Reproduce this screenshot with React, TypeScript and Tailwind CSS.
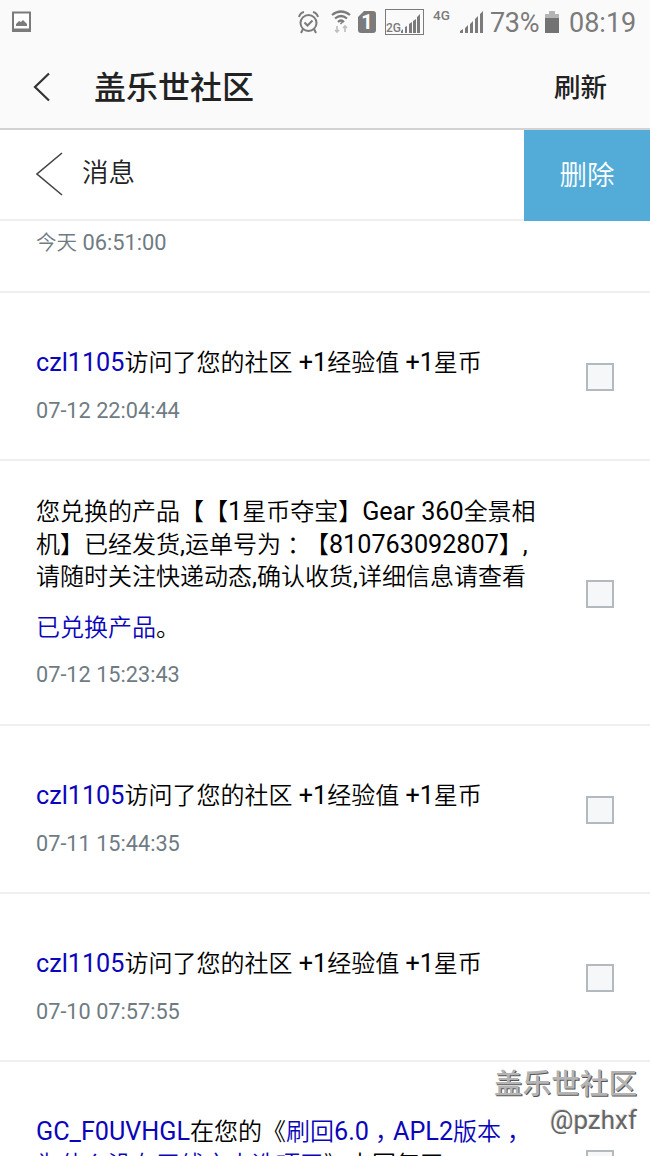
import type { ReactNode } from 'react';

const cjk = "font-['Noto_Sans_CJK_SC',sans-serif]";
const latin = "font-['Roboto','Noto_Sans_CJK_SC',sans-serif]";

function Text({ children }: { children: string }) {
  const parts = children.split(/([\x20-\x7e]+|[，：])/).filter(Boolean);
  return (
    <>
      {parts.map((part, i) => {
        if (/^[，：]$/.test(part)) {
          return (
            <span key={i} className="ml-[6px] -mr-[6px]">
              {part}
            </span>
          );
        }
        return /^[\x20-\x7e]/.test(part) ? (
          <span key={i} className={`${latin} text-[25.2px] font-normal`}>
            {part}
          </span>
        ) : (
          <span key={i}>{part}</span>
        );
      })}
    </>
  );
}

function Line({ children }: { children: ReactNode }) {
  return <div className="h-[32.5px]">{children}</div>;
}

function Link({ children }: { children: string }) {
  return (
    <a className="text-[#0b05bb]">
      <Text>{children}</Text>
    </a>
  );
}

function Time({ children }: { children: ReactNode }) {
  return (
    <div className={`${latin} mt-[21px] h-6 text-[21.7px] font-normal leading-6 text-[#6f7b83]`}>{children}</div>
  );
}

function Row({ className, children }: { className: string; children: ReactNode }) {
  return (
    <li className={`flex shrink-0 items-center border-b-2 border-[#efefef] pl-9 pr-9 ${className}`}>
      <div className="h-full flex-1 whitespace-nowrap text-2xl font-[350] leading-[32.5px] text-black">
        {children}
      </div>
      <span className="relative top-px size-7 shrink-0 border-2 border-[#b3babf] bg-[#f6f7f8]" />
    </li>
  );
}

function Visit({ time }: { time: string }) {
  return (
    <Row className="h-[168px]">
      <div className="pt-[52px]">
        <Line>
          <Link>czl1105</Link>
          <Text>访问了您的社区 +1经验值 +1星币</Text>
        </Line>
      </div>
      <Time>{time}</Time>
    </Row>
  );
}

function Signal() {
  return (
    <svg width="24" height="23" viewBox="0 0 24 23" fill="#7b7b7b">
      <path d="M0 22v-2l3-2v4zM5 22v-5l3-3v8zM10 22v-9l3-3v12zM15 22V8l3-3v17zM20 22V3l3-3v22z" />
    </svg>
  );
}

function StatusBar() {
  return (
    <div className="flex h-11 items-center pl-[11px] pr-[13px] text-[#7b7b7b]">
      <svg width="21" height="22" viewBox="0 0 21 22" className="mr-[266px]">
        <path d="M2 1.5h17v17H2z" fill="#fff" stroke="#7b7b7b" strokeWidth="2" />
        <path d="M1 18h19v3H1zM5 15v-2l3-3 2 1 2-2 4 4v2z" fill="#7b7b7b" />
      </svg>
      <svg width="21" height="23" viewBox="0 0 21 23" fill="none" stroke="#7b7b7b" strokeWidth="2">
        <circle cx="10.5" cy="12" r="8" />
        <path d="M6.5 11.5l3 3 5-5M1 6q1-4 5-5M20 6q-1-4-5-5M5 18l-2 4M16 18l2 4" />
      </svg>
      <svg width="20" height="24" viewBox="0 0 20 24" className="ml-[12px]" fill="none" stroke="#7b7b7b" strokeWidth="2.2">
        <path d="M1 5q9-7 18 0M4 8.5q6-5 12 0M7 12q3-3 6 0" />
        <path d="M10 12.5l1 1" strokeWidth="3" />
        <path d="M6 16v6m-2-2l2 2 2-2M14 22v-6m-2 2l2-2 2 2" stroke="#c0c0c0" strokeWidth="1.7" />
      </svg>
      <span className="ml-[7px] grid h-[22px] w-[18px] place-items-center">
        <svg width="18" height="22" viewBox="0 0 18 22" className="col-start-1 row-start-1" fill="#7b7b7b">
          <path d="M6 0h9q3 0 3 3v16q0 3-3 3H3q-3 0-3-3V6z" />
        </svg>
        <span className={`${latin} col-start-1 row-start-1 text-[20px] font-bold leading-none text-white`}>1</span>
      </span>
      <span className="ml-[9px] flex h-[26px] w-[39px] items-end border-[1.5px] border-[#7b7b7b]">
        <span className={`${latin} text-[12px] font-medium leading-[11px]`}>2G</span>
        <svg width="20" height="21" viewBox="0 0 20 21" fill="#7b7b7b">
          <path d="M0 20v-2l2-2v4zM4 20v-6l2-1v7zM8 20v-9l3-2v11zM12 20V8l3-2v14zM16 20V4l3-3v19z" />
        </svg>
      </span>
      <span className={`${latin} mb-[12px] ml-[9px] w-[18px] text-[13.5px] font-medium leading-none`}>4G</span>
      <span className="ml-[9px]">
        <Signal />
      </span>
      <span className={`${latin} ml-[6px] w-[51px] whitespace-nowrap pt-[2px] text-[27px] leading-none tracking-[-0.3px]`}>
        73%
      </span>
      <svg width="16" height="23" viewBox="0 0 16 23" className="ml-[3px]">
        <path d="M1 3h4V0h6v3h4v5H1z" fill="#b5b5b5" />
        <path d="M1 7h14v15H1z" fill="#737373" />
      </svg>
      <span className={`${latin} ml-[9px] whitespace-nowrap pt-[2px] text-[27px] leading-none`}>08:19</span>
    </div>
  );
}

export default function App() {
  return (
    <main
      className={`${cjk} relative flex h-[1156px] w-[650px] flex-col overflow-hidden bg-white [text-spacing-trim:space-all]`}
    >
      <header className="h-[130px] shrink-0 border-b-2 border-[#d2d2d2] bg-[#fafafa] text-[#222]">
        <StatusBar />
        <div className="flex h-[86px] items-center pl-[33px] pr-[43px]">
          <svg width="18" height="30" viewBox="0 0 18 30" fill="none" stroke="#333" strokeWidth="2.2">
            <path d="M16 1.5L2 15l14 13.5" />
          </svg>
          <h1 className="ml-[43px] flex-1 pb-[4px] text-[32px] font-medium leading-none">盖乐世社区</h1>
          <button className="pb-[2px] text-[26.5px] font-medium leading-none">刷新</button>
        </div>
      </header>
      <nav className="flex h-[91px] shrink-0">
        <div className="flex h-[91px] flex-1 items-center border-b-2 border-[#efefef] pl-[36px]">
          <svg width="27" height="44" viewBox="0 0 27 44" fill="none" stroke="#444" strokeWidth="1.6" className="mb-[2px]">
            <path d="M26 1L1 22l25 21" />
          </svg>
          <span className="ml-[19px] pb-[6px] text-[26.5px] font-[350] leading-none text-[#222]">消息</span>
        </div>
        <button className="w-[126px] bg-[#53acd8] pb-[4px] text-[27.5px] font-[350] leading-none text-white">
          删除
        </button>
      </nav>
      <div className="h-[72px] shrink-0 border-b-2 border-[#efefef] pl-9">
        <div className={`${latin} pt-[10px] text-[21.8px] leading-6 text-[#6f7b83]`}>
          <span className="text-[20.5px] font-[350]">今天</span> 06:51:00
        </div>
      </div>
      <ul className="flex flex-col">
        <Visit time="07-12 22:04:44" />
        <Row className="h-[265px]">
          <div className="pt-[33px]">
            <Line>
              <Text>您兑换的产品【【1星币夺宝】Gear 360全景相</Text>
            </Line>
            <Line>
              <Text>机】已经发货,运单号为：【810763092807】,</Text>
            </Line>
            <Line>
              <Text>请随时关注快递动态,确认收货,详细信息请查看</Text>
            </Line>
          </div>
          <div className="mt-[18px]">
            <Line>
              <Link>已兑换产品</Link>。
            </Line>
          </div>
          <Time>07-12 15:23:43</Time>
        </Row>
        <Visit time="07-11 15:44:35" />
        <Visit time="07-10 07:57:55" />
        <Row className="h-[203px]">
          <div className="pt-[52px]">
            <Line>
              <Link>GC_F0UVHGL</Link>
              <Text>在您的《</Text>
              <Link>刷回6.0，APL2版本，</Link>
            </Line>
            <Line>
              <Link>为什么没有无线充电选项了</Link>
              <Text>》中回复了</Text>
            </Line>
          </div>
        </Row>
      </ul>
      <div className="absolute right-[13px] top-[1064px] flex flex-col items-end whitespace-nowrap">
        <span className="text-[28.6px] font-medium leading-[36px] text-[#b4b4b4] [text-shadow:1px_1px_0_#555]">
          盖乐世社区
        </span>
        <span className={`${latin} text-[26px] leading-[40px] text-[#666] [text-shadow:-1px_-1px_0_#ddd]`}>
          @pzhxf
        </span>
      </div>
    </main>
  );
}
